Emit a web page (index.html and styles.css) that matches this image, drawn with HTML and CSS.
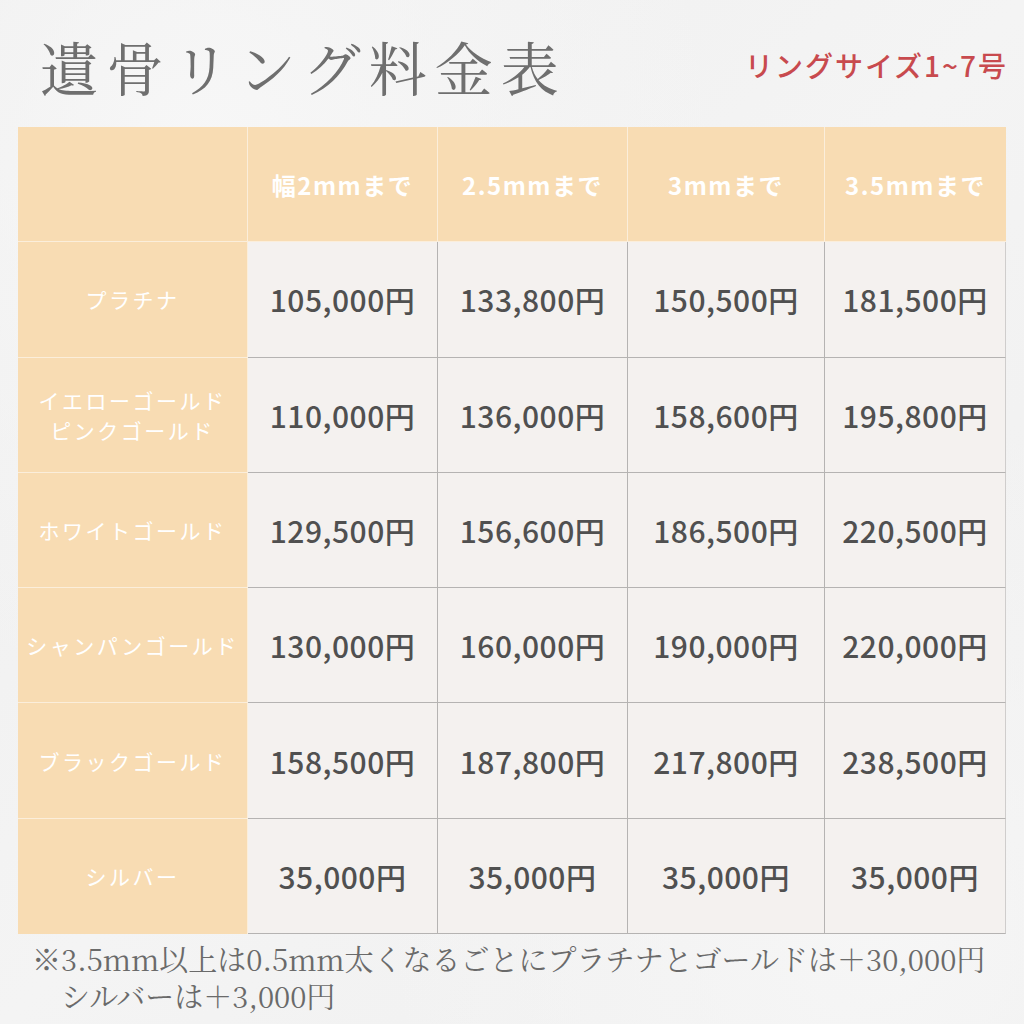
FILE: index.html
```html
<!DOCTYPE html>
<html lang="ja">
<head>
<meta charset="utf-8">
<link rel="stylesheet" href="styles.css">
</head>
<body>
<div class="page">
  <header class="top">
    <h1 class="title">遺骨リング料金表</h1>
    <div class="size">リングサイズ1~7号</div>
  </header>
  <div class="table">
    <div class="hd corner"></div>
    <div class="hd">幅2mmまで</div>
    <div class="hd">2.5mmまで</div>
    <div class="hd">3mmまで</div>
    <div class="hd last">3.5mmまで</div>

    <div class="lb">プラチナ</div>
    <div class="pr">105,000円</div><div class="pr">133,800円</div><div class="pr">150,500円</div><div class="pr last">181,500円</div>

    <div class="lb">イエローゴールド<br>ピンクゴールド</div>
    <div class="pr">110,000円</div><div class="pr">136,000円</div><div class="pr">158,600円</div><div class="pr last">195,800円</div>

    <div class="lb">ホワイトゴールド</div>
    <div class="pr">129,500円</div><div class="pr">156,600円</div><div class="pr">186,500円</div><div class="pr last">220,500円</div>

    <div class="lb tight">シャンパンゴールド</div>
    <div class="pr">130,000円</div><div class="pr">160,000円</div><div class="pr">190,000円</div><div class="pr last">220,000円</div>

    <div class="lb">ブラックゴールド</div>
    <div class="pr">158,500円</div><div class="pr">187,800円</div><div class="pr">217,800円</div><div class="pr last">238,500円</div>

    <div class="lb bottom">シルバー</div>
    <div class="pr bottom">35,000円</div><div class="pr bottom">35,000円</div><div class="pr bottom">35,000円</div><div class="pr bottom last">35,000円</div>
  </div>
  <p class="note">※3.5mm以上は0.5mm太くなるごとにプラチナとゴールドは＋30,000円<br><span class="indent">シルバーは＋3,000円</span></p>
</div>
</body>
</html>
```
FILE: styles.css
```css
html, body {
  margin: 0;
  padding: 0;
}
body {
  width: 1024px;
  height: 1024px;
  overflow: hidden;
  background: #f2f2f2;
  background-image:
    radial-gradient(ellipse at 20% 15%, #f7f7f7 0%, rgba(247,247,247,0) 45%),
    radial-gradient(ellipse at 85% 90%, #f6f6f6 0%, rgba(246,246,246,0) 40%),
    linear-gradient(135deg, #eeeeee 0%, #f4f4f4 50%, #efefef 100%);
}
.page {
  padding: 0 18px 0 18px;
}
.top {
  display: flex;
  justify-content: space-between;
  align-items: flex-end;
  height: 127px;
  box-sizing: border-box;
  padding-bottom: 26px;
}
.title {
  margin: 0 0 0 22px;
  font-family: "Noto Serif CJK JP", "Noto Serif JP", "IPAexMincho", "Liberation Serif", serif;
  font-weight: 400;
  font-size: 58px;
  line-height: 70px;
  letter-spacing: 8px;
  color: #6f6f6f;
}
.size {
  font-family: "Noto Sans CJK JP", sans-serif;
  font-weight: 500;
  font-size: 28px;
  line-height: 34px;
  letter-spacing: 2px;
  color: #c84a4e;
  margin-bottom: 19px;
  margin-right: -2px;
}
.table {
  display: grid;
  grid-template-columns: 230px 190px 190px 197px 181px;
  grid-template-rows: repeat(7, 115.3px);
  width: 988px;
}
.hd, .lb, .pr {
  display: flex;
  align-items: center;
  justify-content: center;
  text-align: center;
  box-sizing: border-box;
  font-family: "Noto Sans CJK JP", sans-serif;
}
.hd {
  background: #f8dcb3;
  color: #ffffff;
  font-weight: 700;
  font-size: 24px;
  letter-spacing: 1.5px;
  border-right: 1px solid #fbeedb;
  border-bottom: 1px solid #fbeedb;
}
.hd.last { border-right: none; }
.lb {
  background: #f8dcb3;
  color: #ffffff;
  font-weight: 400;
  font-size: 21px;
  line-height: 30px;
  letter-spacing: 2.5px;
  border-bottom: 1px solid #fbeedb;
  border-right: 1px solid #fbeedb;
}
.lb.bottom { border-bottom: none; }
.pr {
  background: #f4f1ef;
  color: #505050;
  font-weight: 500;
  font-size: 30px;
  letter-spacing: 0.5px;
  border-right: 1px solid #b5b3b2;
  border-bottom: 1px solid #b5b3b2;
}
.pr.last { border-right: 1px solid #cfcdcc; }
.note {
  margin: 6px 0 0 14px;
  font-family: "Noto Serif CJK JP", "Noto Serif JP", "Liberation Serif", serif;
  font-size: 29px;
  line-height: 37px;
  color: #6a6a6a;
  white-space: nowrap;
}
.indent {
  padding-left: 29px;
}
```
